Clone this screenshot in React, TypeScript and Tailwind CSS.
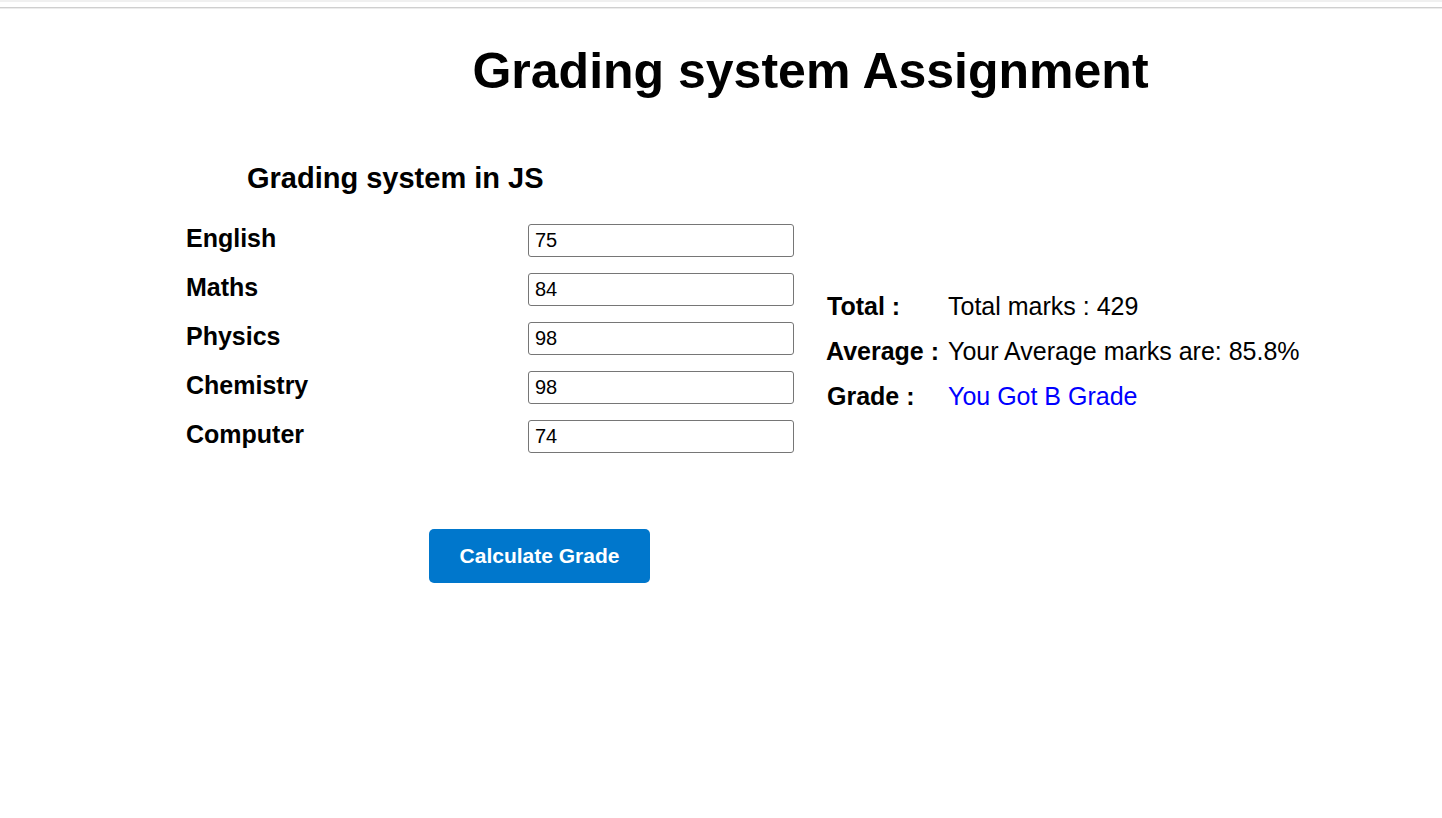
import { useState } from "react";

const subjects = [
  { name: "English", value: "75" },
  { name: "Maths", value: "84" },
  { name: "Physics", value: "98" },
  { name: "Chemistry", value: "98" },
  { name: "Computer", value: "74" },
];

export default function App() {
  const [marks, setMarks] = useState(subjects.map((s) => s.value));

  return (
    <div className="min-h-[818px] bg-white font-['Liberation_Sans',Arial,sans-serif] text-black">
      <div className="h-[2px] bg-[#f0f0f0]" />
      <div className="mt-[5px] h-[1px] bg-[#cfcfcf]" />
      <div className="h-[1px] bg-[#ececec]" />

      <h1 className="mt-[33px] pl-[179px] text-center text-[50px] font-bold leading-[58px]">
        Grading system Assignment
      </h1>

      <div className="pl-[186px]">
        <h2 className="mt-[61px] ml-[61px] text-[29px] font-bold leading-[34px]">
          Grading system in JS
        </h2>

        <div className="mt-[29px] flex items-start">
          <div className="flex flex-col gap-4">
            {subjects.map((s, i) => (
              <div key={s.name} className="flex items-start">
                <label className="w-[342px] text-[25px] font-bold leading-[29px]">
                  {s.name}
                </label>
                <input
                  type="text"
                  value={marks[i]}
                  onChange={(e) =>
                    setMarks((m) => m.map((v, j) => (j === i ? e.target.value : v)))
                  }
                  className="h-[33px] w-[266px] rounded-[3px] border border-[#767676] px-[6px] text-[20px] outline-none"
                />
              </div>
            ))}
          </div>

          <div className="ml-[32px] mt-[60px] flex flex-col">
            <div className="flex text-[25px] leading-[45px]">
              <span className="w-[122px] pl-[1px] font-bold">Total :</span>
              <span>Total marks : 429</span>
            </div>
            <div className="flex text-[25px] leading-[45px]">
              <span className="w-[122px] font-bold">Average :</span>
              <span>Your Average marks are: 85.8%</span>
            </div>
            <div className="flex text-[25px] leading-[45px]">
              <span className="w-[122px] pl-[1px] font-bold">Grade :</span>
              <span className="text-[#0000ff]">You Got B Grade</span>
            </div>
          </div>
        </div>

        <button
          type="button"
          className="ml-[243px] mt-[76px] h-[54px] w-[221px] rounded-[5px] bg-[#0077cc] text-[21px] font-bold text-white"
        >
          Calculate Grade
        </button>
      </div>
    </div>
  );
}
